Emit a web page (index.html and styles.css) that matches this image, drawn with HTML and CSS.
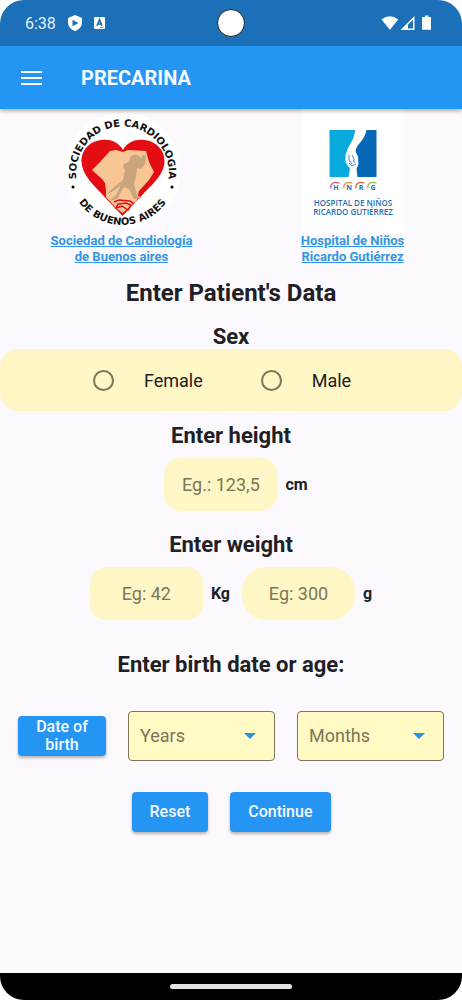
FILE: index.html
```html
<!DOCTYPE html>
<html lang="en">
<head>
<meta charset="utf-8">
<meta name="viewport" content="width=device-width, initial-scale=1">
<title>PRECARINA</title>
<link rel="stylesheet" href="styles.css">
</head>
<body>
<div class="phone">
  <div class="status-bar">
    <div class="status-left">
      <span class="clock">6:38</span>
      <svg width="14" height="16" viewBox="0 0 14 16" aria-hidden="true"><path fill="#fff" d="M7 0 14 3v4.500c0 4-3 7.300-7 8.500-4-1.200-7-4.500-7-8.500V3z"/><path fill="#1b70b7" d="M4.500 4.800 10.500 8l-6 3.200z"/></svg>
      <svg width="11" height="12" viewBox="0 0 11 12" aria-hidden="true"><rect width="11" height="12" rx="1" fill="#fff"/><path fill="none" stroke="#1b70b7" stroke-width="1.600" d="M3 8.800 5.500 2.600 8 8.800M4 7h3"/><path stroke="#1b70b7" stroke-width=".7" d="M6 10.500h3.500"/></svg>
    </div>
    <span class="camera"></span>
    <div class="status-right">
      <svg width="51" height="16" viewBox="0 0 51 16" aria-hidden="true">
        <path fill="#fff" d="M.500 4.500Q8.800-2 17.200 4.500L8.900 14.800z"/>
        <path fill="#fff" d="M33.500 1v14H19.500zM32 4.800 27 9.800v3.700h5z" fill-rule="evenodd"/>
        <path fill="#fff" d="M44 .5h3.500V2H50v12.800h-9V2h3z"/>
      </svg>
    </div>
  </div>

  <header class="app-bar">
    <button class="menu" type="button" aria-label="Open menu">
      <svg width="21" height="14" viewBox="0 0 21 14" aria-hidden="true"><path stroke="#fff" stroke-width="2" d="M0 1h21M0 7h21M0 13h21"/></svg>
    </button>
    <span class="app-title">PRECARINA</span>
  </header>

  <main class="content">
    <div class="partners">
      <div class="partner">
        <svg class="logo" width="124" height="124" viewBox="0 0 124 124" role="img" aria-label="Sociedad de Cardiología de Buenos Aires">
          <defs>
            <path id="arc-top" d="M18 77A46.400 46.400 0 1 1 107 77"/>
            <path id="arc-bottom" d="M9.500 69A53.400 53.400 0 0 0 115.500 69"/>
          </defs>
          <circle cx="62.500" cy="62" r="58" fill="#fff"/>
          <path fill="#e30d13" d="M63 41C58 32 49 30 42 31 29 32 21 42 21.500 53 22 64 31 74 40 83L62.500 107 85 83C95 73 104 64 104.500 53 105 41 96 32 84 31 76 30 67 33 63 41z"/>
          <path fill="#f8c694" d="M50 42 56 41 63 43 68 41 86 42 89 53 94 63 89 71 79 82 77 91 70 98 62.500 104 56 99 46 88 46 82 45 74 42 70 32 61 40 53z"/>
          <path fill="none" stroke="#e30d13" stroke-width="1.500" d="M54 93 59 91 70 92 74 95M58 95 56 99 62 97 68 101 71 96 66 94z"/>
          <path fill="#c9a47d" d="M70 50C70 46 76 44 80 48L83 52 85 55 81 60 77 59 76 68 74 75 77 86 82 89 74 90 69 80 64 78 57 90 49 92 56 86 61 76 55 81 46 86 54 78 63 71 65 61C62 58 63 54 67 54zM81 49 83 46 86 47 85 55z"/>
          <g class="ring-text">
            <text><textPath href="#arc-top" startOffset="50%">SOCIEDAD DE CARDIOLOGIA</textPath></text>
            <text><textPath href="#arc-bottom" startOffset="50%">DE BUENOS AIRES</textPath></text>
          </g>
          <circle cx="13" cy="78" r="1.500"/><circle cx="112" cy="78" r="1.500"/>
        </svg>
        <a href="#">Sociedad de Cardiología<br>de Buenos aires</a>
      </div>
      <div class="partner">
        <svg class="logo" width="124" height="124" viewBox="0 0 124 124" role="img" aria-label="Hospital de Niños Ricardo Gutiérrez">
          <rect x="11" width="102" height="124" fill="#fff"/>
          <path fill="#08aadb" d="M38.500 21H64.500L62 30 57 39 54.500 46 54.500 53 57 57 59 59 57.500 68H38.500z"/>
          <path fill="#0569b5" d="M85.500 21V68H66.500L65.500 60 67.500 55 67 48 64.500 42C66 34 73 33 75.500 21z"/>
          <path fill="none" stroke="#0569b5" stroke-width=".8" d="M58 46 58 51 61 55M61 46 63 50 63 54M58 54 61 57 65 55"/>
          <g fill="none" stroke-width="1.200" stroke-linecap="round">
            <path stroke="#d94f80" d="M40 79C39 75 43 72 48 74"/>
            <path stroke="#e9903f" d="M53 79C52 75 56 72 61 74"/>
            <path stroke="#dc5947" d="M65 79C64 75 68 72 73 74"/>
            <path stroke="#8dbb4c" d="M77 79C76 75 80 72 85 74"/>
          </g>
          <g class="hospital-text">
            <g class="hospital-initials"><text x="45" y="81">H</text><text x="58" y="81">N</text><text x="70" y="81">R</text><text x="82" y="81">G</text></g>
            <text x="62" y="97">HOSPITAL DE NIÑOS</text>
            <text x="62" y="106">RICARDO GUTIÉRREZ</text>
          </g>
        </svg>
        <a href="#">Hospital de Niños<br>Ricardo Gutiérrez</a>
      </div>
    </div>

    <form class="patient-form">
      <h1>Enter Patient's Data</h1>

      <h2 id="sex-title">Sex</h2>
      <div class="sex-options" role="radiogroup" aria-labelledby="sex-title">
        <label><input type="radio" name="sex" value="female">Female</label>
        <label><input type="radio" name="sex" value="male">Male</label>
      </div>

      <h2 class="height-title">Enter height</h2>
      <div class="measure-row height-row">
        <input id="height" type="text" inputmode="decimal" placeholder="Eg.: 123,5">
        <label for="height">cm</label>
      </div>

      <h2 class="weight-title">Enter weight</h2>
      <div class="measure-row">
        <input id="kilos" type="text" inputmode="numeric" placeholder="Eg: 42">
        <label for="kilos">Kg</label>
        <input id="grams" class="round" type="text" inputmode="numeric" placeholder="Eg: 300">
        <label for="grams">g</label>
      </div>

      <h2 class="age-title">Enter birth date or age:</h2>
      <div class="age-row">
        <button class="btn date-btn" type="button">Date of birth</button>
        <div class="picker"><select aria-label="Years"><option>Years</option></select></div>
        <div class="picker"><select aria-label="Months"><option>Months</option></select></div>
      </div>

      <div class="actions">
        <button class="btn" type="reset">Reset</button>
        <button class="btn" type="button">Continue</button>
      </div>
    </form>
  </main>

  <div class="nav-bar"><span class="nav-handle"></span></div>
</div>
</body>
</html>
```
FILE: styles.css
```css
* { box-sizing: border-box; }

body {
  margin: 0;
  background: #fff;
  color: #202024;
  font-family: Roboto, "Liberation Sans", sans-serif;
}

.phone {
  display: flex;
  flex-direction: column;
  min-height: 100vh;
  overflow: hidden;
  border-radius: 24px;
  background: #fbf9fd;
}

.status-bar {
  display: grid;
  grid-template-columns: 1fr auto 1fr;
  align-items: center;
  height: 46px;
  padding: 0 30px 0 25px;
  background: #1b70b7;
}
.status-left { display: flex; align-items: center; gap: 12px; }
.clock { color: #e5f1fb; font-size: 16px; }
.status-right { display: flex; justify-content: flex-end; }
.camera {
  width: 28px;
  height: 28px;
  margin-left: 4px;
  border: 1px solid #222;
  border-radius: 50%;
  background: #fff;
}

.app-bar {
  display: flex;
  align-items: center;
  gap: 39px;
  height: 63px;
  padding: 0 21px;
  background: #2495f2;
  box-shadow: 0 2px 4px rgba(0, 0, 0, .3);
  z-index: 1;
}
.menu { display: flex; padding: 0; border: 0; background: none; }
.app-title { color: #f4faff; font-size: 20px; font-weight: 700; }

.content { flex: 1; }

.partners {
  display: grid;
  grid-template-columns: 1fr 1fr;
  gap: 12px;
  padding-left: 12px;
}
.partner { display: flex; flex-direction: column; align-items: center; }
.logo { display: block; }
.partner a {
  color: #3097e4;
  font-size: 13px;
  font-weight: 700;
  line-height: 16px;
  text-align: center;
}
.ring-text {
  font-family: "DejaVu Sans", sans-serif;
  font-size: 10px;
  font-weight: 700;
  text-anchor: middle;
  fill: #111;
}
.hospital-text {
  font-family: "Open Sans", sans-serif;
  font-size: 8px;
  font-weight: 600;
  text-anchor: middle;
  fill: #1f6fb5;
}
.hospital-initials { font-size: 7px; font-weight: 700; }

h1, h2 { margin: 0; font-weight: 700; line-height: 28px; text-align: center; }
h1 { padding-top: 14px; font-size: 24px; }
h2 { font-size: 22px; }
#sex-title { padding-top: 17px; line-height: 25px; }
.height-title { padding-top: 11px; }
.weight-title { padding-top: 20px; }
.age-title { padding-top: 31px; }

.sex-options {
  display: flex;
  justify-content: center;
  align-items: center;
  gap: 58px;
  height: 62px;
  padding-right: 18px;
  border-radius: 18px;
  background: #fff6c5;
}
.sex-options label { display: flex; align-items: center; gap: 30px; font-size: 18px; }
.sex-options input {
  appearance: none;
  width: 21px;
  height: 21px;
  margin: 0;
  border: 2px solid #7b7659;
  border-radius: 50%;
}
.sex-options input:checked { background: #2495f2; }

.measure-row {
  display: flex;
  justify-content: center;
  align-items: center;
  gap: 8px;
  padding-top: 8px;
}
.height-row { padding-left: 10px; }
.measure-row input {
  width: 113px;
  height: 53px;
  padding: 0;
  border: 0;
  border-radius: 16px;
  background: #fff6c5;
  color: #202024;
  font: 18px Roboto, "Liberation Sans", sans-serif;
  text-align: center;
}
.measure-row .round { margin-left: 4px; border-radius: 24px; }
.measure-row input::placeholder { color: #7b7659; opacity: 1; }
.measure-row label { font-size: 16px; font-weight: 700; }

.age-row {
  display: grid;
  grid-template-columns: 88px 1fr 1fr;
  align-items: center;
  gap: 22px;
  padding: 32px 18px 0;
}
.picker { position: relative; }
.picker::after {
  content: "";
  position: absolute;
  top: 22px;
  right: 19px;
  border: 6px solid transparent;
  border-top-color: #2495e8;
  border-bottom: 0;
  pointer-events: none;
}
.picker select {
  appearance: none;
  display: block;
  width: 100%;
  height: 50px;
  padding: 0 36px 2px 11px;
  border: 1px solid #7b7659;
  border-radius: 4px;
  background: #fff9c4;
  color: #7b7659;
  font: 18px Roboto, "Liberation Sans", sans-serif;
}

.btn {
  min-height: 40px;
  padding: 0 18px;
  border: 0;
  border-radius: 4px;
  background: #2495f2;
  box-shadow: 0 2px 3px rgba(0, 0, 0, .28);
  color: #f4faff;
  font: 500 16px/18px Roboto, "Liberation Sans", sans-serif;
}
.date-btn { padding: 2px 12px; }
.actions { display: flex; justify-content: center; gap: 22px; padding: 31px 0 24px; }

.nav-bar {
  display: flex;
  justify-content: center;
  align-items: center;
  height: 27px;
  background: #000;
}
.nav-handle { width: 122px; height: 5px; border-radius: 3px; background: #e4e4e4; }
```
